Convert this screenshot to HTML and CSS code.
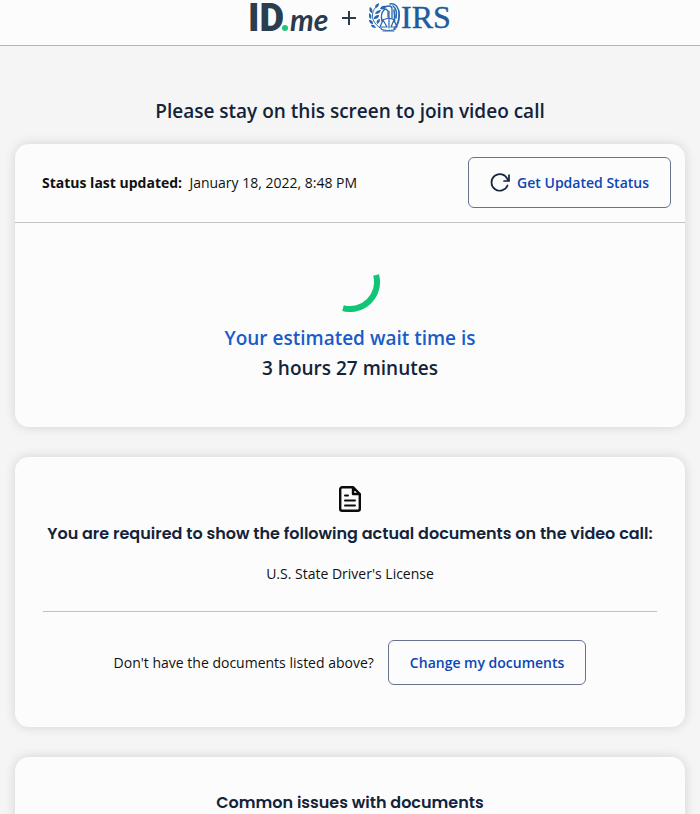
FILE: index.html
```html
<!DOCTYPE html>
<html lang="en">
<head>
<meta charset="utf-8">
<meta name="viewport" content="width=device-width, initial-scale=1">
<title>ID.me + IRS</title>
<link rel="stylesheet" href="styles.css">
</head>
<body>
<header class="site-header">
  <svg class="logo-idme" width="84" height="36" viewBox="-4 0 84 36" role="img" aria-label="ID.me">
    <text class="logo-id" x="-2" y="31">ID</text>
    <circle cx="35" cy="28" r="3" fill="#1fc776"/>
    <text class="logo-me" x="40" y="31">me</text>
  </svg>
  <svg class="plus" width="14" height="14" viewBox="0 0 14 14" aria-hidden="true"><path d="M7 0v14M0 7h14" stroke="#2b3a4c" stroke-width="2"/></svg>
  <svg class="logo-irs" width="82" height="36" viewBox="0 0 82 36" role="img" aria-label="IRS">
    <g fill="#2866ad">
      <path d="M7 8C5 6 7 4 10 3c0 3-1 4-3 5zM11 9c1-3 3-4 6-3-1 3-3 4-6 3zM3 13C0 12 0 9 1 7c2 1 3 3 2 6zM6 14c1-3 3-4 6-4-1 3-3 4-6 4zM2 19c-2-1-3-3-2-6 2 1 3 3 2 6zM5 19c0-3 2-4 5-4 0 3-2 4-5 4zM4 24c-3 0-4-2-4-4 3 0 4 1 4 4zM8 24c-1-3 0-4 3-5 0 3-1 4-3 5zM7 28c-3 0-5-1-5-3 3-1 4 1 5 3z"/>
    </g>
    <g fill="none" stroke="#2866ad" stroke-linecap="round" stroke-linejoin="round">
      <path d="M7 7C1 13 2 23 13 29" stroke-width="1"/>
      <path d="M15 10c0-3 2-4 5-4 2 0 3 1 3 3v9M15 10l2-1 2 2v6M15 10c-3 3-3 7-2 11" stroke-width="1.300"/>
      <path d="M21 4c6-1 9 4 9 10 0 7-1 11-5 15M24 6c4 3 4 7 3 12M25 10c1 5 1 8 0 12M30 11c1 6 0 11-3 16" stroke-width="1.500"/>
      <path d="M20 11v17M13 20l7-2 6 2M14 20l-3 7h7zM25 20l-3 7h6z" stroke-width="1.200"/>
      <path d="M12 29c4 2 11 2 15 0M14 31h11" stroke-width="1"/>
    </g>
    <text class="logo-irs-text" x="32" y="28">IRS</text>
  </svg>
</header>
<main class="page">
  <h1 class="title">Please stay on this screen to join video call</h1>

  <section class="card">
    <div class="status-bar">
      <p class="text"><strong>Status last updated:</strong>&nbsp; January 18, 2022, 8:48 PM</p>
      <button class="button button-large" type="button">
        <svg width="20" height="20" viewBox="0 0 20 20" fill="none" stroke="#14253c" stroke-width="1.700" stroke-linecap="round" stroke-linejoin="round" aria-hidden="true"><path d="M19 2v6h-5M17.500 12.500A8.300 8.300 0 1 1 17.500 6.300L19 8"/></svg>
        Get Updated Status
      </button>
    </div>
    <div class="wait">
      <svg class="spinner" width="60" height="60" viewBox="0 0 60 60" aria-hidden="true"><path d="M56.100 23A27 27 0 0 1 23 56.100" fill="none" stroke="#11c577" stroke-width="6"/></svg>
      <h2 class="wait-text"><span class="wait-label">Your estimated wait time is</span><br>3 hours 27 minutes</h2>
    </div>
  </section>

  <section class="card documents">
    <svg class="doc-icon" width="22" height="26" viewBox="0 0 22 26" fill="none" stroke="#0b0b0b" stroke-width="2.400" stroke-linecap="round" stroke-linejoin="round" aria-hidden="true"><path d="M14 1.200H3.200a2 2 0 0 0-2 2v19.600a2 2 0 0 0 2 2h15.600a2 2 0 0 0 2-2V8zM14 1.200V8h6.800"/><path d="M6 9.500h3M6 14.500h10M6 19.500h10" stroke-width="2"/></svg>
    <h2 class="heading">You are required to show the following actual documents on the video call:</h2>
    <p class="text">U.S. State Driver's License</p>
    <hr class="divider">
    <div class="change">
      <p class="text">Don't have the documents listed above?</p>
      <button class="button" type="button">Change my documents</button>
    </div>
  </section>

  <section class="card issues">
    <h2 class="heading">Common issues with documents</h2>
  </section>
</main>
</body>
</html>
```

FILE: styles.css
```css
* {
  box-sizing: border-box;
}

body {
  margin: 0;
  background: #f5f5f5;
  color: #111;
  font-family: "Open Sans", "Noto Sans", sans-serif;
  font-size: 14px;
  line-height: 20px;
}

h1, h2, p {
  margin: 0;
}

.site-header {
  display: flex;
  justify-content: center;
  align-items: flex-start;
  height: 46px;
  padding-right: 4px;
  background: #fcfcfc;
  border-bottom: 1px solid #b4b4b4;
}

.plus {
  margin: 11px 13px 0 12px;
}

.logo-id {
  font: 900 38px Roboto, sans-serif;
  fill: #2b3e50;
}

.logo-me {
  font: italic 700 30px Lato, sans-serif;
  fill: #2b3a4c;
}

.logo-irs-text {
  font: 32px "Liberation Serif", serif;
  fill: #1c5c9e;
  stroke: #1c5c9e;
  stroke-width: 0.4px;
}

.page {
  padding: 50px 15px 0;
}

.title {
  margin-bottom: 18px;
  color: #13233a;
  font-size: 19px;
  line-height: 30px;
  font-weight: 600;
  text-align: center;
}

.card {
  margin-bottom: 30px;
  background: #fcfcfc;
  border-radius: 14px;
  box-shadow: 0 0 12px rgba(0, 0, 0, 0.14);
}

.status-bar {
  display: flex;
  justify-content: space-between;
  align-items: center;
  padding: 13px 14px 14px 27px;
  border-bottom: 1px solid #c0c2c4;
}

.button {
  display: flex;
  align-items: center;
  gap: 7px;
  padding: 11px 21px;
  background: transparent;
  border: 1px solid #66738a;
  border-radius: 6px;
  color: #0b46b5;
  font: inherit;
  font-weight: 600;
  line-height: 21px;
}

.button-large {
  padding: 14px 21px;
}

.wait {
  padding: 29px 20px 44px;
  text-align: center;
}

.spinner {
  display: block;
  margin: 0 auto 11px;
}

.wait-text {
  color: #13233a;
  font-size: 19px;
  line-height: 30px;
  font-weight: 600;
}

.wait-label {
  color: #185cc9;
}

.documents {
  padding: 29px 28px 42px;
  text-align: center;
}

.doc-icon {
  display: block;
  margin: 0 auto 12px;
}

.heading {
  color: #13233a;
  font-family: Poppins, Inter, sans-serif;
  font-size: 16px;
  line-height: 20px;
  font-weight: 600;
  text-align: center;
}

.documents .heading {
  margin: 0 -20px 20px;
}

.divider {
  margin: 27px 0 28px;
  border: 0;
  border-top: 1px solid #c0c2c4;
}

.change {
  display: flex;
  justify-content: center;
  align-items: center;
  gap: 14px;
}

.issues {
  padding: 36px 28px;
}
```
